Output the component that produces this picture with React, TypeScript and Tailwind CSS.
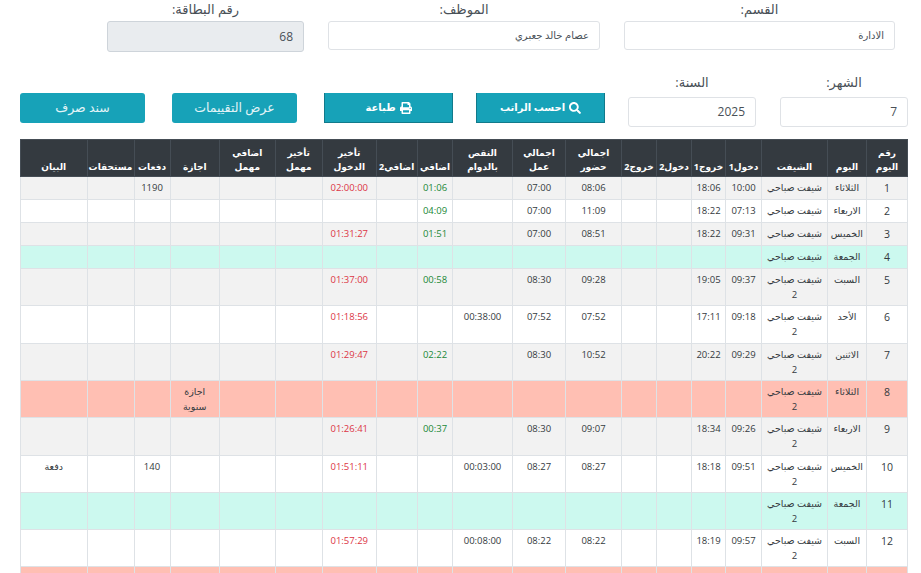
import { FaPrint, FaSearch } from 'react-icons/fa'

type Row = {
  no: number
  day?: string
  shift?: string
  in1?: string
  out1?: string
  attend?: string
  work?: string
  short?: string
  extra?: string
  late?: string
  leave?: string
  paid?: string
  note?: string
  kind?: 'friday' | 'off'
}

const s1 = 'شيفت صباحي'
const s2 = 'شيفت صباحي 2'

const rows: Row[] = [
  { no: 1, day: 'الثلاثاء', shift: s1, in1: '10:00', out1: '18:06', attend: '08:06', work: '07:00', extra: '01:06', late: '02:00:00', paid: '1190' },
  { no: 2, day: 'الاربعاء', shift: s1, in1: '07:13', out1: '18:22', attend: '11:09', work: '07:00', extra: '04:09' },
  { no: 3, day: 'الخميس', shift: s1, in1: '09:31', out1: '18:22', attend: '08:51', work: '07:00', extra: '01:51', late: '01:31:27' },
  { no: 4, day: 'الجمعة', shift: s1, kind: 'friday' },
  { no: 5, day: 'السبت', shift: s2, in1: '09:37', out1: '19:05', attend: '09:28', work: '08:30', extra: '00:58', late: '01:37:00' },
  { no: 6, day: 'الأحد', shift: s2, in1: '09:18', out1: '17:11', attend: '07:52', work: '07:52', short: '00:38:00', late: '01:18:56' },
  { no: 7, day: 'الاثنين', shift: s2, in1: '09:29', out1: '20:22', attend: '10:52', work: '08:30', extra: '02:22', late: '01:29:47' },
  { no: 8, day: 'الثلاثاء', shift: s2, leave: 'اجازة سنوية', kind: 'off' },
  { no: 9, day: 'الاربعاء', shift: s2, in1: '09:26', out1: '18:34', attend: '09:07', work: '08:30', extra: '00:37', late: '01:26:41' },
  { no: 10, day: 'الخميس', shift: s2, in1: '09:51', out1: '18:18', attend: '08:27', work: '08:27', short: '00:03:00', late: '01:51:11', paid: '140', note: 'دفعة' },
  { no: 11, day: 'الجمعة', shift: s2, kind: 'friday' },
  { no: 12, day: 'السبت', shift: s2, in1: '09:57', out1: '18:19', attend: '08:22', work: '08:22', short: '00:08:00', late: '01:57:29' },
  { no: 13, kind: 'off' },
]

const columns: [string, string][] = [
  ['رقم اليوم', 'w-[41px]'],
  ['اليوم', 'w-[39px]'],
  ['الشيفت', 'w-[66px]'],
  ['دخول1', 'w-[36px]'],
  ['خروج1', 'w-[34px]'],
  ['دخول2', 'w-[35px]'],
  ['خروج2', 'w-[35px]'],
  ['اجمالي حضور', 'w-[56px]'],
  ['اجمالي عمل', 'w-[53px]'],
  ['النقص بالدوام', 'w-[60px]'],
  ['اضافي', 'w-[35px]'],
  ['اضافي2', 'w-[41.5px]'],
  ['تأخير الدخول', 'w-[53.5px]'],
  ['تأخير مهمل', 'w-[47.5px]'],
  ['اضافي مهمل', 'w-[55.5px]'],
  ['اجازة', 'w-[49.5px]'],
  ['دفعات', 'w-[36px]'],
  ['مستحقات', 'w-[47px]'],
  ['البيان', 'w-[66.5px]'],
]

function Field({ label, value, className, inputClass }: { label: string; value: string; className: string; inputClass?: string }) {
  return (
    <div className={className}>
      <div className="text-center text-[13px] leading-[18px] text-[#495057]">{label}</div>
      <div className={inputClass}>{value}</div>
    </div>
  )
}

function Cell({ children, className = '' }: { children?: React.ReactNode; className?: string }) {
  return <td className={`border border-[#dee2e6] px-[3px] pt-1 pb-[3px] align-top ${className}`}>{children}</td>
}

export default function App() {
  return (
    <div dir="rtl" className="h-screen overflow-hidden bg-white font-['Open_Sans','DejaVu_Sans',sans-serif] text-[#343a40]">
      <div className="flex gap-6 pr-[26px]">
        <Field
          label="القسم:"
          value="الادارة"
          className="w-[271px]"
          inputClass="mt-[3px] flex h-[29px] items-center rounded-[3px] border border-[#dfe2e6] bg-white px-[10px] text-[10px] text-[#495057]"
        />
        <Field
          label="الموظف:"
          value="عصام خالد جعبري"
          className="w-[272px]"
          inputClass="mt-[3px] flex h-[29px] items-center rounded-[3px] border border-[#dfe2e6] bg-white px-[10px] text-[10px] text-[#495057]"
        />
        <Field
          label="رقم البطاقة:"
          value="68"
          className="w-[197px]"
          inputClass="mt-[3px] flex h-[31px] items-center rounded-[3px] border border-[#ced4da] bg-[#e9ecef] px-[10px] text-[12px] text-[#495057]"
        />
      </div>

      <div className="mt-[21px] flex items-start pr-[13px]">
        <Field
          label="الشهر:"
          value="7"
          className="w-[128px]"
          inputClass="mt-[6px] flex h-[30px] items-center rounded-[3px] border border-[#dfe2e6] bg-white px-[10px] text-[12px] text-[#495057]"
        />
        <Field
          label="السنة:"
          value="2025"
          className="mr-6 w-[128px]"
          inputClass="mt-[6px] flex h-[30px] items-center rounded-[3px] border border-[#dfe2e6] bg-white px-[10px] text-[12px] text-[#495057]"
        />
        <button className="mt-[20px] mr-[23px] flex h-[30px] w-[129px] items-center justify-center gap-1 border-r border-b border-l border-[#117a8b] bg-[#17a2b8] text-[10px] font-bold text-white">
          <FaSearch className="size-3" />
          احسب الراتب
        </button>
        <button className="mt-[20px] mr-[23px] flex h-[30px] w-[129px] items-center justify-center gap-1 border-r border-b border-l border-[#117a8b] bg-[#17a2b8] text-[10px] font-bold text-white">
          <FaPrint className="size-3" />
          طباعة
        </button>
        <button className="mt-[20px] mr-[27px] h-[30px] w-[125px] rounded-[3px] bg-[#17a2b8] text-[12.5px] text-[#e3f4f7]">عرض التقييمات</button>
        <button className="mt-[20px] mr-[27px] h-[30px] w-[125px] rounded-[3px] bg-[#17a2b8] text-[12.5px] text-[#e3f4f7]">سند صرف</button>
      </div>

      <div className="mt-[12px] pr-[13px]">
        <table className="w-[887px] table-fixed text-center text-[9.5px] leading-[14.5px]">
          <colgroup>
            {columns.map(([name, width]) => (
              <col key={name} className={width} />
            ))}
          </colgroup>
          <thead>
            <tr className="h-[37px] bg-[#343a40] text-white">
              {columns.map(([name]) => (
                <th key={name} className="border border-[#454d55] px-0 pt-[3px] pb-[2px] align-bottom text-[9px] leading-[14px] font-bold">
                  {name}
                </th>
              ))}
            </tr>
          </thead>
          <tbody>
            {rows.map((r) => {
              let bg = r.no % 2 ? 'bg-[#f2f2f2]' : 'bg-white'
              if (r.kind === 'friday') bg = 'bg-[#ccf9ef]'
              if (r.kind === 'off') bg = 'bg-[#ffbfb3]'
              return (
                <tr key={r.no} className={`${bg} ${r.no === 6 || r.no === 9 ? 'h-[38px]' : 'h-[23px]'}`}>
                  <Cell className="text-[10.5px]">{r.day && r.no}</Cell>
                  <Cell>{r.day}</Cell>
                  <Cell>{r.shift}</Cell>
                  <Cell>{r.in1}</Cell>
                  <Cell>{r.out1}</Cell>
                  <Cell />
                  <Cell />
                  <Cell>{r.attend}</Cell>
                  <Cell>{r.work}</Cell>
                  <Cell>{r.short}</Cell>
                  <Cell className="text-[#218838]">{r.extra}</Cell>
                  <Cell />
                  <Cell className="text-[#dc3545]">{r.late}</Cell>
                  <Cell />
                  <Cell />
                  <Cell>{r.leave}</Cell>
                  <Cell>{r.paid}</Cell>
                  <Cell />
                  <Cell>{r.note}</Cell>
                </tr>
              )
            })}
          </tbody>
        </table>
      </div>
    </div>
  )
}
